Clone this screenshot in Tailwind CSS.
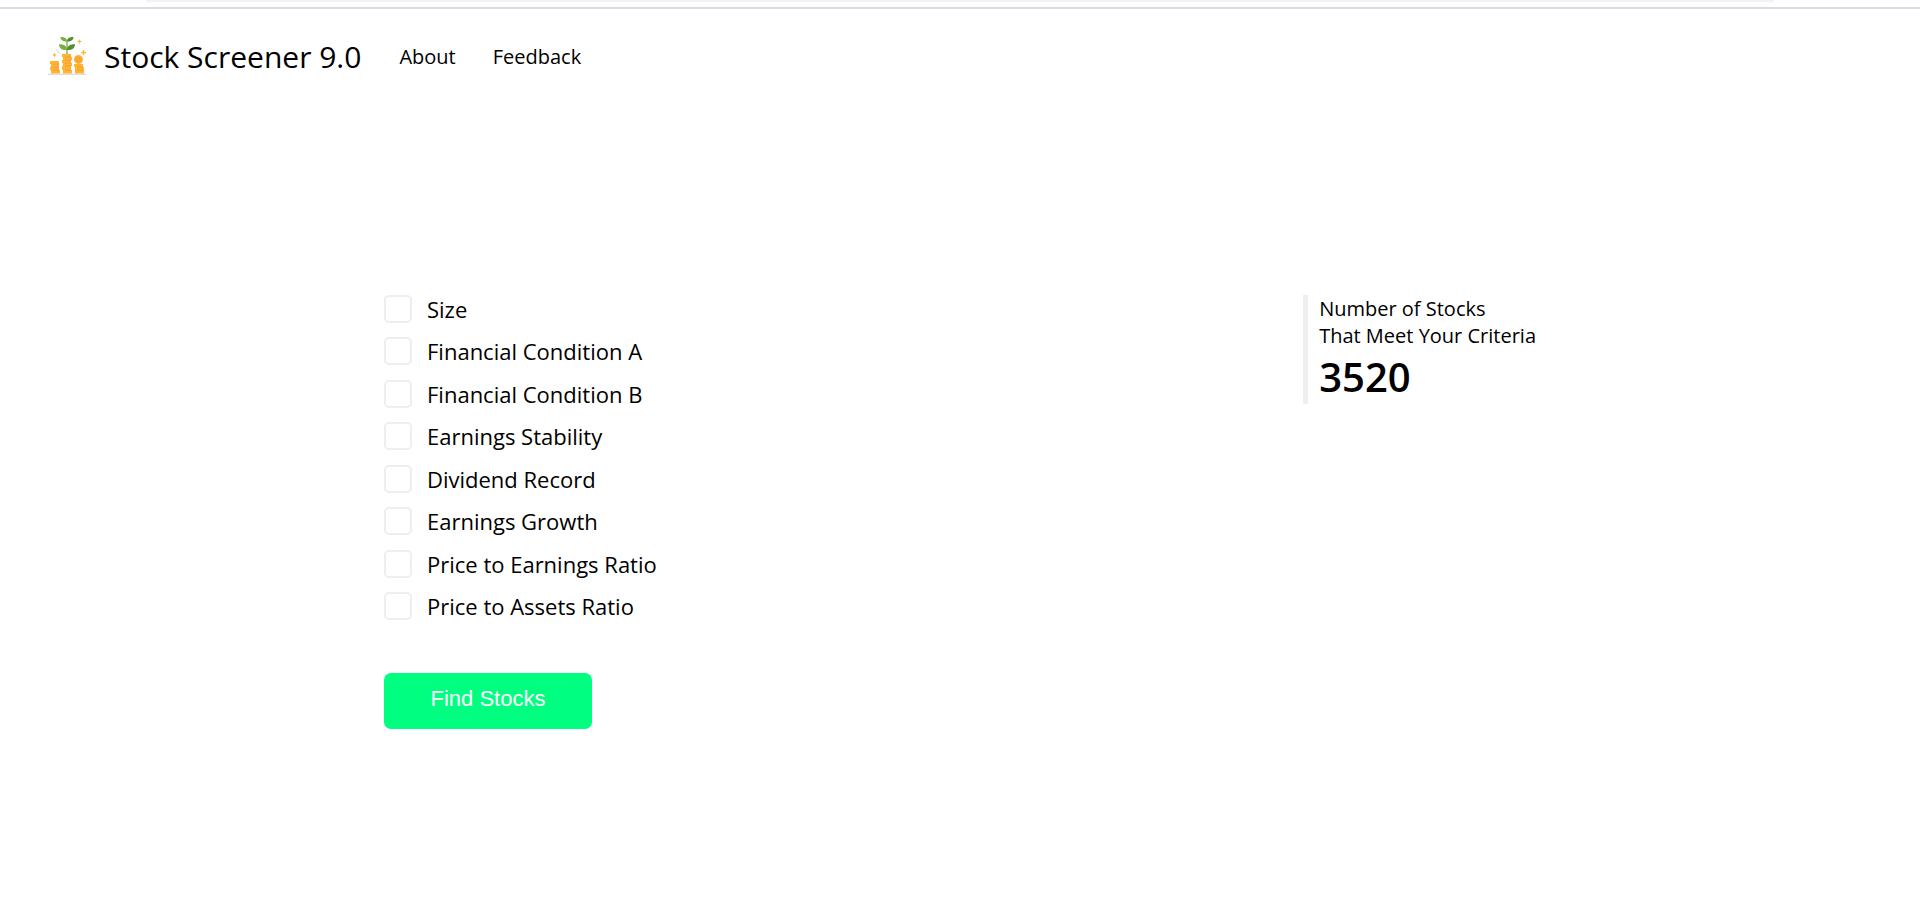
<!DOCTYPE html>
<html lang="en">
<head>
<meta charset="utf-8">
<meta name="viewport" content="width=device-width, initial-scale=1">
<title>Stock Screener 9.0</title>
<script src="https://cdn.jsdelivr.net/npm/@tailwindcss/browser@4"></script>
</head>
<body class="bg-white text-black font-['Open_Sans',sans-serif]">
<div class="h-[9px] border-b-2 border-[#dadae2]"><div class="ml-[146px] mr-[146px] h-[2px] rounded-b-sm bg-[#f2f2f2]"></div></div>
<header class="flex h-24 items-center px-12">
  <svg class="mb-[2px] h-10 w-[38px] shrink-0" viewBox="0 0 38 40" aria-hidden="true">
    <path d="M0 38.3h38" stroke="#dedee6" stroke-width="1.6"/>
    <path d="M9.5 20q1 3 3.500 5" transform="translate(-1 -7)" fill="none" stroke="#e4e6ed" stroke-width="1.5"/>
    <path d="M19 19V5" stroke="#8cb653" stroke-width="1.5"/>
    <path d="M19 5.500C14 6 12.500 3 12.500 1c4 0 6.500 1 6.500 4.500ZM19 14C13 14.500 11 11.500 11 8.300c5 0 8 1.700 8 5.700Z" fill="#79ad45"/>
    <path d="M19 5.500c5 .5 6.500-2.500 6.500-4.500-4 0-6.500 1-6.500 4.500ZM19 14c6 .5 8-2.500 8-5.700-5 0-8 1.700-8 5.700Z" fill="#568d32"/>
    <g fill="#ffb531">
      <path d="M2 25h9v3H2zM3 28h8v3H3zM2 31h9v3H2zM3 34h9v3.500H3z"/>
      <path d="M14 18h9v3h-9zM15 21h9v3h-9zM14 24h9v3h-9zM15 27h9v3h-9zM14 30h9v4h-9zM15 34h9v3.500h-9z"/>
      <path d="M26 28h9v3h-9zM27 31h9v3h-9zM27 34h9v3.500h-9z"/>
      <circle cx="30.500" cy="23.500" r="4.500"/>
      <path d="m31.500 3 .7 1.700 1.800.8-1.800.8-.7 1.700-.7-1.700-1.800-.8 1.800-.8zM6.500 16.500l.7 1.800 1.800.7-1.800.7-.7 1.800-.7-1.800-1.800-.7 1.800-.7z"/>
    </g>
    <path d="M35.500 14v5M33 16.500h5" stroke="#ffb531" stroke-width="1.300"/>
    <g stroke="#f9983a" stroke-width="1" fill="none">
      <path d="M5 28h6M5 31h6M5 34h6M17 21h6M17 24h6M17 27h6M17 30h6M17 34h6M29 31h6M29 34h6"/>
      <circle cx="30.500" cy="23.500" r="2.500"/><path d="m29 25 3-3"/>
    </g>
  </svg>
  <a href="#" class="ml-[18px] text-[30px] leading-10">Stock Screener 9.0</a>
  <nav class="ml-[38px] flex gap-[37px] text-[20px] leading-7" aria-label="Main">
    <a href="#about">About</a>
    <a href="#feedback">Feedback</a>
  </nav>
</header>
<main class="mx-[20%] mt-[190px] flex items-start justify-between">
  <form>
    <div class="flex h-[325px] flex-col justify-between text-[22px] leading-7">
      <label class="flex items-center gap-[15px]"><input type="checkbox" class="size-7 appearance-none rounded-[5px] border-2 border-[#eee] checked:bg-[#00ff80]">Size</label>
      <label class="flex items-center gap-[15px]"><input type="checkbox" class="size-7 appearance-none rounded-[5px] border-2 border-[#eee] checked:bg-[#00ff80]">Financial Condition A</label>
      <label class="flex items-center gap-[15px]"><input type="checkbox" class="size-7 appearance-none rounded-[5px] border-2 border-[#eee] checked:bg-[#00ff80]">Financial Condition B</label>
      <label class="flex items-center gap-[15px]"><input type="checkbox" class="size-7 appearance-none rounded-[5px] border-2 border-[#eee] checked:bg-[#00ff80]">Earnings Stability</label>
      <label class="flex items-center gap-[15px]"><input type="checkbox" class="size-7 appearance-none rounded-[5px] border-2 border-[#eee] checked:bg-[#00ff80]">Dividend Record</label>
      <label class="flex items-center gap-[15px]"><input type="checkbox" class="size-7 appearance-none rounded-[5px] border-2 border-[#eee] checked:bg-[#00ff80]">Earnings Growth</label>
      <label class="flex items-center gap-[15px]"><input type="checkbox" class="size-7 appearance-none rounded-[5px] border-2 border-[#eee] checked:bg-[#00ff80]">Price to Earnings Ratio</label>
      <label class="flex items-center gap-[15px]"><input type="checkbox" class="size-7 appearance-none rounded-[5px] border-2 border-[#eee] checked:bg-[#00ff80]">Price to Assets Ratio</label>
    </div>
    <button type="button" class="mt-[53px] h-14 w-52 rounded-[7px] bg-[#00ff80] pb-1 font-['Liberation_Sans',sans-serif] text-[22px] leading-7 text-white">Find Stocks</button>
  </form>
  <section class="border-l-[5px] border-[#eee] pl-[11px]">
    <p class="text-[20px] leading-[27px]">Number of Stocks<br>That Meet Your Criteria</p>
    <p class="text-[40px] leading-[55px] font-semibold">3520</p>
  </section>
</main>
</body>
</html>
